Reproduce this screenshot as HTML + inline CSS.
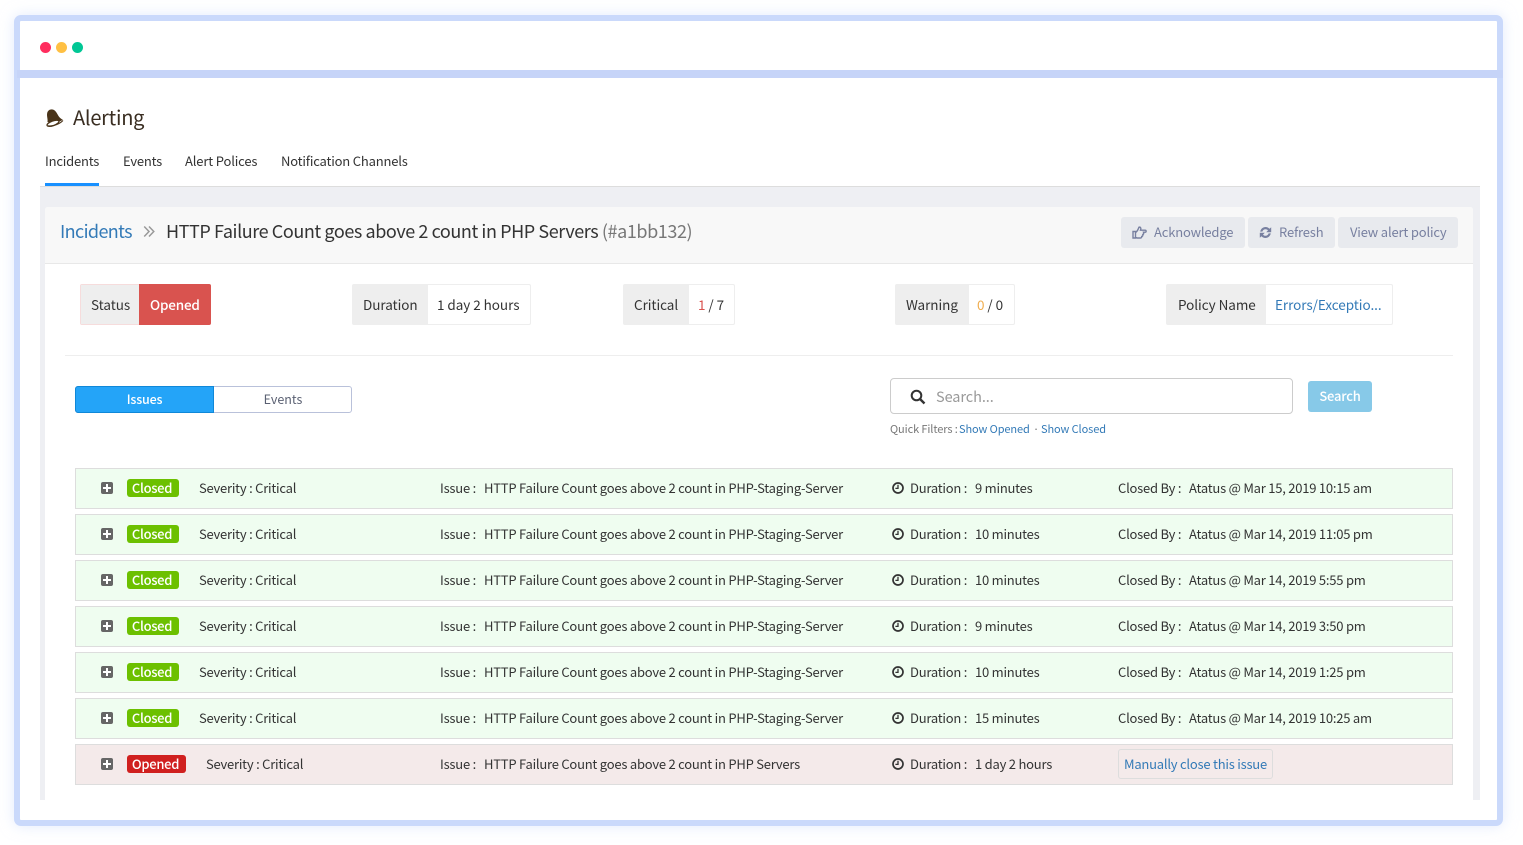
<!DOCTYPE html>
<html>
<head>
<meta charset="utf-8">
<style>
*{box-sizing:border-box;margin:0;padding:0}
html,body{width:1523px;height:845px;overflow:hidden;background:#fff}
body{position:relative;font-family:"Noto Sans CJK JP","Liberation Sans",sans-serif;font-size:13px;color:#333}
.a{position:absolute;white-space:nowrap}
.t{position:absolute;white-space:nowrap;line-height:20px;height:20px}
svg{position:absolute;display:block}
a{color:#337ab7;text-decoration:none}
.nav{font-size:13px;letter-spacing:-.2px;color:#333;top:151px}
.row{position:absolute;left:75px;width:1378px;height:41px;background:#effdf0;border:1px solid #ddd;font-size:13px;letter-spacing:-.23px}
.row.o{background:#f4eaea}
.row .t{top:9px}
.pl{position:absolute;left:25px;top:13px;width:12px;height:12px;background:#666;border-radius:2px}
.pl:before{content:"";position:absolute;left:2px;top:5px;width:8px;height:2px;background:#fff}
.pl:after{content:"";position:absolute;left:5px;top:2px;width:2px;height:8px;background:#fff}
.b{position:absolute;left:51px;top:10px;width:52px;height:18px;padding-right:2px;border-radius:3px;background:#6cc000;color:#fff;font-weight:500;text-align:center;line-height:18px;font-size:13px;letter-spacing:-.3px}
.o .b{background:#d0201f;width:59px}
.row svg{left:816px;top:13px}
.g{position:absolute;top:284px;height:41px;border:1px solid #eee;border-radius:2px;background:#fff;font-size:13.5px;letter-spacing:-.05px}
.g .l{position:absolute;left:0;top:0;bottom:0;background:#eee}
.g .t{top:9px}
.btn{position:absolute;top:217px;height:31px;background:#e8eaee;border-radius:3px;color:#7880a0;font-size:13px;letter-spacing:-.17px}
.btn .t{top:5px}
</style>
</head>
<body>
<div class="a" style="left:14px;top:15px;width:1489px;height:811px;border:6px solid #cad9fb;border-radius:7px;background:#fff;box-shadow:0 0 14px rgba(202,217,251,.55)"></div>
<div class="a" style="left:17px;top:70px;width:1486px;height:8px;background:#c6d4f8"></div>

<div class="a" style="left:40px;top:42px;width:11px;height:11px;border-radius:50%;background:#ff2d5e"></div>
<div class="a" style="left:56px;top:42px;width:11px;height:11px;border-radius:50%;background:#ffc043"></div>
<div class="a" style="left:72px;top:42px;width:11px;height:11px;border-radius:50%;background:#00c795"></div>

<svg style="left:45px;top:108px" width="20" height="20" viewBox="0 0 20 20"><path d="M2.500 14C3 11 1.500 8 2.200 5C2.800 2 6 .6 8.500 1.800C11 3 12 5.500 13.500 8C14.500 9.500 16 10.800 17.800 11.800C14 14.500 8 16 2.500 14Z" fill="#4a3419"/><ellipse cx="8" cy="15.300" rx="6.300" ry="2.300" transform="rotate(-20 8 15.300)" fill="#fff" stroke="#4a3419" stroke-width="1.300"/><path d="M3 17.800C8 18.500 14 16.500 18 12.500" fill="none" stroke="#4a3419" stroke-width="1.100"/></svg>
<div class="t" style="left:73px;top:102px;height:30px;line-height:30px;font-size:20px;color:#3a2e22;letter-spacing:-.25px">Alerting</div>

<div class="t nav" style="left:45px">Incidents</div>
<div class="t nav" style="left:123px">Events</div>
<div class="t nav" style="left:185px;letter-spacing:-.15px">Alert Polices</div>
<div class="t nav" style="left:281px;letter-spacing:-.18px">Notification Channels</div>

<div class="a" style="left:40px;top:186px;width:1440px;height:614px;background:#eeeff3;border-top:1px solid #ddd"></div>
<div class="a" style="left:45px;top:183px;width:54px;height:3px;background:#1890ff"></div>
<div class="a" style="left:45px;top:207px;width:1428px;height:593px;background:#fff;border-radius:3px 3px 0 0"></div>
<div class="a" style="left:45px;top:207px;width:1428px;height:57px;background:#f8f8f8;border-bottom:1px solid #e8e8e8;border-radius:3px 3px 0 0"></div>

<div class="t" style="left:60px;top:216px;height:30px;line-height:30px;font-size:18px;letter-spacing:-.62px"><a>Incidents</a></div>
<svg style="left:143px;top:225px" width="12" height="13" viewBox="0 0 12 13"><path d="M1.200 1.500L6 6.500L1.200 11.500M6 1.500L10.800 6.500L6 11.500" fill="none" stroke="#999" stroke-width="1.500"/></svg>
<div class="t" style="left:166px;top:216px;height:30px;line-height:30px;font-size:18px;color:#333;letter-spacing:-.42px">HTTP Failure Count goes above 2 count in PHP Servers <span style="color:#777">(#a1bb132)</span></div>

<div class="btn" style="left:1121px;width:124px">
<svg style="left:11px;top:9px" width="15" height="13" viewBox="0 0 15 13"><path d="M1 5.500H3.500V12H1ZM3.500 6.500C5.500 5.500 6 3.500 7 1.200C8.800 .8 9.200 2.400 8.500 4.200H13C14.500 4.200 14.500 6.200 13 6.200H11.500C12 7.500 11.500 8.500 10.800 8.500C11 10 10.300 10.500 9.700 10.500C9.700 12 9 12 8.500 12H5L3.500 11" fill="none" stroke="#7880a0" stroke-width="1.400"/></svg>
<div class="t" style="left:33px">Acknowledge</div></div>
<div class="btn" style="left:1248px;width:87px">
<svg style="left:11px;top:9px" width="13" height="13" viewBox="0 0 13 13"><path d="M1.200 5.600C1.800 2.800 4 1 6.500 1C8.200 1 9.600 1.800 10.500 2.800L12.200 1.200V6.200H7.200L9 4.400C8.400 3.600 7.500 3.200 6.500 3.200C5 3.200 3.800 4.200 3.400 5.600ZM11.800 7.400C11.200 10.200 9 12 6.500 12C4.800 12 3.400 11.200 2.500 10.200L.8 11.800V6.800H5.800L4 8.600C4.600 9.400 5.500 9.800 6.500 9.800C8 9.800 9.200 8.800 9.600 7.400Z" fill="#7880a0"/></svg>
<div class="t" style="left:31px">Refresh</div></div>
<div class="btn" style="left:1338px;width:120px"><div class="t" style="left:12px">View alert policy</div></div>

<div class="g" style="left:80px;width:131px;border-color:#f6dcdc"><div class="l" style="width:58px"></div><div class="t" style="left:10px">Status</div><div class="a" style="left:58px;top:-1px;bottom:-1px;right:-1px;background:#d9534f;border-radius:0 2px 2px 0"></div><div class="t" style="left:69px;color:#fff;font-weight:500;letter-spacing:-.2px">Opened</div></div>
<div class="g" style="left:352px;width:179px"><div class="l" style="width:75px"></div><div class="t" style="left:10px">Duration</div><div class="t" style="left:84px">1 day 2 hours</div></div>
<div class="g" style="left:623px;width:112px"><div class="l" style="width:65px"></div><div class="t" style="left:10px">Critical</div><div class="t" style="left:74px"><span style="color:#d9534f">1</span> / 7</div></div>
<div class="g" style="left:895px;width:120px"><div class="l" style="width:73px"></div><div class="t" style="left:10px">Warning</div><div class="t" style="left:81px"><span style="color:#f0ad4e">0</span> / 0</div></div>
<div class="g" style="left:1166px;width:227px"><div class="l" style="width:99px"></div><div class="t" style="left:11px">Policy Name</div><div class="t" style="left:108px"><a>Errors/Exceptio...</a></div></div>

<div class="a" style="left:65px;top:355px;width:1388px;height:1px;background:#eee"></div>

<div class="a" style="left:75px;top:386px;width:277px;height:27px;border:1px solid #b9c1da;border-radius:3px;background:#fff"></div>
<div class="a" style="left:75px;top:386px;width:139px;height:27px;border:1px solid #1088d8;border-radius:3px 0 0 3px;background:#24a4f8"></div>
<div class="t" style="left:75px;width:139px;top:389px;text-align:center;color:#fff;font-weight:500;font-size:12.500px;letter-spacing:-.2px">Issues</div>
<div class="t" style="left:214px;width:138px;top:389px;text-align:center;color:#5a6072;font-size:12.500px">Events</div>

<div class="a" style="left:890px;top:378px;width:403px;height:36px;border:1px solid #ccc;border-radius:4px;background:#fff"></div>
<svg style="left:910px;top:389px" width="16" height="16" viewBox="0 0 16 16"><circle cx="6.500" cy="6.500" r="4.800" fill="none" stroke="#333" stroke-width="2"/><path d="M10 10L14.500 14.500" stroke="#333" stroke-width="2.400"/></svg>
<div class="t" style="left:936px;top:387px;font-size:14.500px;color:#999;letter-spacing:-.07px">Search...</div>
<div class="a" style="left:1308px;top:381px;width:64px;height:31px;background:#87c9e8;border-radius:3px;color:#fff;font-weight:500;text-align:center;line-height:30px;font-size:13px;letter-spacing:-.2px">Search</div>
<div class="t" style="left:890px;top:419px;font-size:11px;color:#777;letter-spacing:-.1px">Quick Filters :<a style="position:absolute;left:69px">Show Opened</a><span style="position:absolute;left:143px">·</span><a style="position:absolute;left:151px">Show Closed</a></div>

<div class="row" style="top:468px"><i class="pl"></i><span class="b">Closed</span><span class="t" style="left:123px">Severity : Critical</span><span class="t" style="left:364px">Issue :</span><span class="t" style="left:408px">HTTP Failure Count goes above 2 count in PHP-Staging-Server</span><svg width="12" height="12" viewBox="0 0 12 12"><circle cx="6" cy="6" r="5" fill="none" stroke="#333" stroke-width="1.700"/><path d="M6 2.800V6.400H3.400" fill="none" stroke="#333" stroke-width="1.300"/></svg><span class="t" style="left:834px">Duration :</span><span class="t" style="left:899px">9 minutes</span><span class="t" style="left:1042px">Closed By :</span><span class="t" style="left:1113px">Atatus @ Mar 15, 2019 10:15 am</span></div>
<div class="row" style="top:514px"><i class="pl"></i><span class="b">Closed</span><span class="t" style="left:123px">Severity : Critical</span><span class="t" style="left:364px">Issue :</span><span class="t" style="left:408px">HTTP Failure Count goes above 2 count in PHP-Staging-Server</span><svg width="12" height="12" viewBox="0 0 12 12"><circle cx="6" cy="6" r="5" fill="none" stroke="#333" stroke-width="1.700"/><path d="M6 2.800V6.400H3.400" fill="none" stroke="#333" stroke-width="1.300"/></svg><span class="t" style="left:834px">Duration :</span><span class="t" style="left:899px">10 minutes</span><span class="t" style="left:1042px">Closed By :</span><span class="t" style="left:1113px">Atatus @ Mar 14, 2019 11:05 pm</span></div>
<div class="row" style="top:560px"><i class="pl"></i><span class="b">Closed</span><span class="t" style="left:123px">Severity : Critical</span><span class="t" style="left:364px">Issue :</span><span class="t" style="left:408px">HTTP Failure Count goes above 2 count in PHP-Staging-Server</span><svg width="12" height="12" viewBox="0 0 12 12"><circle cx="6" cy="6" r="5" fill="none" stroke="#333" stroke-width="1.700"/><path d="M6 2.800V6.400H3.400" fill="none" stroke="#333" stroke-width="1.300"/></svg><span class="t" style="left:834px">Duration :</span><span class="t" style="left:899px">10 minutes</span><span class="t" style="left:1042px">Closed By :</span><span class="t" style="left:1113px">Atatus @ Mar 14, 2019 5:55 pm</span></div>
<div class="row" style="top:606px"><i class="pl"></i><span class="b">Closed</span><span class="t" style="left:123px">Severity : Critical</span><span class="t" style="left:364px">Issue :</span><span class="t" style="left:408px">HTTP Failure Count goes above 2 count in PHP-Staging-Server</span><svg width="12" height="12" viewBox="0 0 12 12"><circle cx="6" cy="6" r="5" fill="none" stroke="#333" stroke-width="1.700"/><path d="M6 2.800V6.400H3.400" fill="none" stroke="#333" stroke-width="1.300"/></svg><span class="t" style="left:834px">Duration :</span><span class="t" style="left:899px">9 minutes</span><span class="t" style="left:1042px">Closed By :</span><span class="t" style="left:1113px">Atatus @ Mar 14, 2019 3:50 pm</span></div>
<div class="row" style="top:652px"><i class="pl"></i><span class="b">Closed</span><span class="t" style="left:123px">Severity : Critical</span><span class="t" style="left:364px">Issue :</span><span class="t" style="left:408px">HTTP Failure Count goes above 2 count in PHP-Staging-Server</span><svg width="12" height="12" viewBox="0 0 12 12"><circle cx="6" cy="6" r="5" fill="none" stroke="#333" stroke-width="1.700"/><path d="M6 2.800V6.400H3.400" fill="none" stroke="#333" stroke-width="1.300"/></svg><span class="t" style="left:834px">Duration :</span><span class="t" style="left:899px">10 minutes</span><span class="t" style="left:1042px">Closed By :</span><span class="t" style="left:1113px">Atatus @ Mar 14, 2019 1:25 pm</span></div>
<div class="row" style="top:698px"><i class="pl"></i><span class="b">Closed</span><span class="t" style="left:123px">Severity : Critical</span><span class="t" style="left:364px">Issue :</span><span class="t" style="left:408px">HTTP Failure Count goes above 2 count in PHP-Staging-Server</span><svg width="12" height="12" viewBox="0 0 12 12"><circle cx="6" cy="6" r="5" fill="none" stroke="#333" stroke-width="1.700"/><path d="M6 2.800V6.400H3.400" fill="none" stroke="#333" stroke-width="1.300"/></svg><span class="t" style="left:834px">Duration :</span><span class="t" style="left:899px">15 minutes</span><span class="t" style="left:1042px">Closed By :</span><span class="t" style="left:1113px">Atatus @ Mar 14, 2019 10:25 am</span></div>
<div class="row o" style="top:744px"><i class="pl"></i><span class="b">Opened</span><span class="t" style="left:130px">Severity : Critical</span><span class="t" style="left:364px">Issue :</span><span class="t" style="left:408px">HTTP Failure Count goes above 2 count in PHP Servers</span><svg width="12" height="12" viewBox="0 0 12 12"><circle cx="6" cy="6" r="5" fill="none" stroke="#333" stroke-width="1.700"/><path d="M6 2.800V6.400H3.400" fill="none" stroke="#333" stroke-width="1.300"/></svg><span class="t" style="left:834px">Duration :</span><span class="t" style="left:899px">1 day 2 hours</span><span class="a" style="left:1042px;top:4px;width:155px;height:30px;border:1px solid #ddd;border-radius:3px"></span><span class="t" style="left:1048px"><a>Manually close this issue</a></span></div>
</body>
</html>
